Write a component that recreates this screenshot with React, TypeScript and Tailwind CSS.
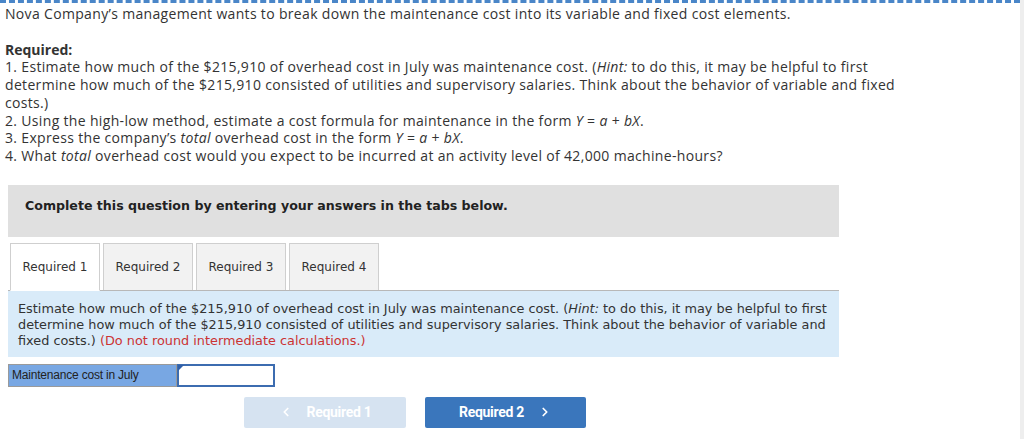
import { ChevronLeft, ChevronRight } from 'lucide-react';

const tabs = ['Required 1', 'Required 2', 'Required 3', 'Required 4'];

function App() {
    return (
        <div className="flex w-[1024px] h-[439px] bg-white overflow-hidden">
            <div className="w-[1020px] flex flex-col">
                {/* top rule */}
                <div className="h-[3px] border-t-[3px] border-dashed border-[#4a86c8]" />

                {/* question text */}
                <div className="pl-[5px] pt-[2px] text-[14px] leading-[17.7px] tracking-[0.33px] text-[#333] whitespace-nowrap font-['Open_Sans',sans-serif]">
                    <p>Nova Company’s management wants to break down the maintenance cost into its variable and fixed cost elements.</p>
                    <p className="mt-[18px] font-bold tracking-normal">Required:</p>
                    <p>
                        1. Estimate how much of the $215,910 of overhead cost in July was maintenance cost. (<i>Hint:</i> to do this, it may be helpful to first
                        <br />
                        determine how much of the $215,910 consisted of utilities and supervisory salaries. Think about the behavior of variable and fixed
                        <br />
                        costs.)
                    </p>
                    <p>2. Using the high-low method, estimate a cost formula for maintenance in the form <i>Y</i> = <i>a</i> + <i>bX</i>.</p>
                    <p>3. Express the company’s <i>total</i> overhead cost in the form <i>Y</i> = <i>a</i> + <i>bX</i>.</p>
                    <p>4. What <i>total</i> overhead cost would you expect to be incurred at an activity level of 42,000 machine-hours?</p>
                </div>

                {/* answer area */}
                <div className="ml-[8px] w-[831px] mt-[20px] font-['DejaVu_Sans',Verdana,sans-serif]">
                    <div className="h-[52px] bg-[#e0e0e0] flex items-center pl-[17px] pb-[8px] text-[12.6px] font-bold text-[#222]">
                        Complete this question by entering your answers in the tabs below.
                    </div>

                    {/* tabs */}
                    <div className="mt-[7px] flex items-end pl-[2px] border-b border-[#b8b8b8] h-[47px]">
                        {tabs.map((t, i) => (
                            <div
                                key={t}
                                className={`w-[90px] h-[47px] flex items-center justify-center text-[12px] text-[#333] border border-[#cfcfcf] ${
                                    i === 0 ? 'bg-white border-b-white -mb-px h-[48px]' : 'bg-[#f2f2f2] border-b-0 ml-[3px]'
                                }`}
                            >
                                {t}
                            </div>
                        ))}
                    </div>

                    {/* instructions */}
                    <div className="bg-[#d9ebf9] h-[66px] pl-[10px] pr-[4px] pt-[10px] text-[12.85px] leading-[16px] text-[#333] whitespace-nowrap">
                        Estimate how much of the $215,910 of overhead cost in July was maintenance cost. (<i>Hint:</i> to do this, it may be helpful to first
                        <br />
                        determine how much of the $215,910 consisted of utilities and supervisory salaries. Think about the behavior of variable and
                        <br />
                        fixed costs.) <span className="text-[#cc3333]">(Do not round intermediate calculations.)</span>
                    </div>

                    {/* answer row */}
                    <div className="mt-[7px] flex h-[23px] font-['Liberation_Sans',Arial,sans-serif]">
                        <div className="w-[169px] bg-[#78a7e3] border border-[#9a9a9a] flex items-center pl-[3px] text-[12px] text-[#222] tracking-[-0.2px]">
                            Maintenance cost in July
                        </div>
                        <div className="relative w-[98px] bg-white border-2 border-[#3c6cb0]">
                            <div className="absolute -top-px -left-px w-0 h-0 border-t-[6px] border-r-[6px] border-t-[#2f5fa8] border-r-transparent" />
                        </div>
                    </div>

                    {/* nav buttons */}
                    <div className="mt-[10px] flex gap-[19px] pl-[236px] font-['Roboto',sans-serif]">
                        <button className="w-[162px] h-[31px] rounded-[2px] bg-[#d6e3f1] text-white text-[14px] font-bold tracking-[-0.3px] flex items-center justify-center gap-[14px]">
                            <ChevronLeft className="w-[14px] h-[14px]" strokeWidth={3} />
                            <span>Required 1</span>
                        </button>
                        <button className="w-[161px] h-[31px] rounded-[2px] bg-[#3a76bc] text-white text-[14px] font-bold tracking-[-0.3px] flex items-center justify-center gap-[14px]">
                            <span>Required 2</span>
                            <ChevronRight className="w-[14px] h-[14px]" strokeWidth={3} />
                        </button>
                    </div>
                </div>
            </div>
            {/* scrollbar track */}
            <div className="w-[4px] h-full bg-[#eeeeee]" />
        </div>
    );
}

export default App;
